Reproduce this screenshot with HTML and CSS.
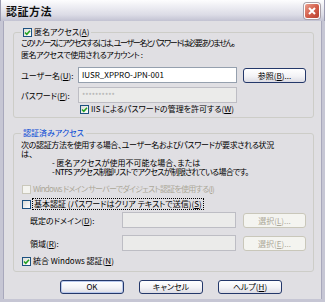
FILE: index.html
```html
<!DOCTYPE html>
<html lang="ja">
<head>
    <meta charset="UTF-8">
    <title>認証方法</title>
    <link rel="stylesheet" href="styles.css">
</head>
<body>
    <div class="window">
        <div class="titlebar">
            <span class="title">認証方法</span>
            <span class="close">
                <svg viewBox="0 0 14 14" width="14" height="14"><path d="M4 4l6 6M10 4l-6 6" /></svg>
            </span>
        </div>
        <div class="frame">
            <fieldset class="group">
                <legend>
                    <span class="legend-inner">
                        <span class="cb"><svg viewBox="0 0 7 7" width="7" height="7"><path d="M1 3.4l1.8 1.9L6 1.7" /></svg></span>
                        <span>匿名アクセス(<u>A</u>)</span>
                    </span>
                </legend>
                <p class="line tight">このリソースにアクセスするには、ユーザー名とパスワードは必要ありません。</p>
                <p class="line account">匿名アクセスで使用されるアカウント :</p>
                <div class="field-row first">
                    <span class="label">ユーザー名(<u>U</u>):</span>
                    <div class="input">IUSR_XPPRO-JPN-001</div>
                    <button class="btn">参照(<u>B</u>)...</button>
                </div>
                <div class="field-row">
                    <span class="label">パスワード(<u>P</u>):</span>
                    <div class="input disabled"><span class="stars">**********</span></div>
                </div>
                <div class="check-row iis">
                    <span class="cb"><svg viewBox="0 0 7 7" width="7" height="7"><path d="M1 3.4l1.8 1.9L6 1.7" /></svg></span>
                    <span>IIS によるパスワードの管理を許可する(<u>W</u>)</span>
                </div>
            </fieldset>

            <fieldset class="group second">
                <legend><span class="legend-inner blue">認証済みアクセス</span></legend>
                <div class="note">
                    <p class="slight">次の認証方法を使用する場合、ユーザー名およびパスワードが要求される状況</p>
                    <p>は、</p>
                    <p class="dash">- 匿名アクセスが使用不可能な場合、または</p>
                    <p class="dash narrow">- NTFS アクセス制御リストでアクセスが制限されている場合です。</p>
                </div>
                <div class="check-row digest off">
                    <span class="cb"></span>
                    <span class="narrow">Windows ドメイン サーバーでダイジェスト認証を使用する(<u>I</u>)</span>
                </div>
                <div class="check-row basic">
                    <span class="cb"></span>
                    <span class="focus">基本認証 (パスワードはクリア テキストで送信)(<u>S</u>)</span>
                </div>
                <div class="field-row domain">
                    <span class="label">既定のドメイン(<u>D</u>):</span>
                    <div class="input disabled"></div>
                    <button class="btn" disabled>選択(<u>L</u>)...</button>
                </div>
                <div class="field-row realm">
                    <span class="label">領域(<u>R</u>):</span>
                    <div class="input disabled"></div>
                    <button class="btn" disabled>選択(<u>E</u>)...</button>
                </div>
                <div class="check-row integrated">
                    <span class="cb"><svg viewBox="0 0 7 7" width="7" height="7"><path d="M1 3.4l1.8 1.9L6 1.7" /></svg></span>
                    <span>統合 Windows 認証(<u>N</u>)</span>
                </div>
            </fieldset>

            <div class="actions">
                <button class="btn default">OK</button>
                <button class="btn">キャンセル</button>
                <button class="btn">ヘルプ(<u>H</u>)</button>
            </div>
        </div>
    </div>
</body>
</html>
```

FILE: styles.css
```css
*{
    box-sizing : border-box;
}

body{
    margin : 0;
    background : #fff;
    font-family : "Noto Sans CJK JP", sans-serif;
    font-size : 8px;
    color : #000;
    font-feature-settings : "palt";
    white-space : nowrap;
}

p{
    margin : 0;
}

u{
    text-decoration-thickness : 1px;
    text-underline-offset : 1px;
}

/* kana in the original font run narrower than Noto's */
.tight{
    letter-spacing : -1.3px;
}

.narrow{
    letter-spacing : -0.75px;
}

.account{
    letter-spacing : -0.45px;
}

.slight{
    letter-spacing : -0.35px;
}

.window{
    width : 325px;
    height : 302px;
    display : flex;
    flex-direction : column;
    background : #e0dfe3;
    overflow : hidden;
}

.titlebar{
    height : 21px;
    flex : none;
    display : flex;
    align-items : center;
    justify-content : space-between;
    padding : 0 4px 0 5px;
    background : linear-gradient(#fdfdfe, #ececf2 35%, #dcdce6 70%, #c2c2d2);
    border-left : 1px solid #9c9cb2;
    border-right : 1px solid #9c9cb2;
}

.title{
    font-size : 11px;
    font-weight : bold;
    letter-spacing : 0.5px;
    color : #111;
}

.close{
    width : 16px;
    height : 16px;
    display : flex;
    align-items : center;
    justify-content : center;
    border : 1px solid #fff;
    border-radius : 3px;
    background : linear-gradient(135deg, #eaa08f, #d4604c 50%, #b8402e);
    box-shadow : 0 0 0 1px #a8a0a8;
}

.close path{
    stroke : #fff;
    stroke-width : 2;
    fill : none;
}

.frame{
    flex : 1;
    display : flex;
    flex-direction : column;
    border : 3px solid #c6c6d4;
    border-top : 0;
    box-shadow : inset 1px 0 0 #a8a8bc, inset -1px 0 0 #a8a8bc;
    padding : 6px 8px 0 10px;
}

.group{
    margin : 0;
    min-width : 0;
    padding : 0 6px 3px 7px;
    border : 1px solid #cdcdc8;
    border-radius : 3px;
}

.group legend{
    padding : 0 2px;
    height : 10px;
}

.legend-inner{
    display : flex;
    align-items : center;
    gap : 2px;
    height : 10px;
    line-height : 10px;
}

.blue{
    color : #0046d5;
}

.line{
    height : 12px;
    line-height : 12px;
}

.cb{
    width : 9px;
    height : 9px;
    flex : none;
    display : flex;
    align-items : center;
    justify-content : center;
    border : 1px solid #1c5180;
    background : linear-gradient(135deg, #dcdcd7, #fff);
}

.cb path{
    fill : none;
    stroke : #21a121;
    stroke-width : 1.5;
}

.check-row{
    display : flex;
    align-items : center;
    gap : 2px;
    height : 10px;
    line-height : 10px;
}

.check-row.off{
    color : #aca899;
}

.check-row.off .cb{
    border-color : #cac8bb;
    background : #f4f4f0;
}

.focus{
    outline : 1px dotted #000;
    outline-offset : 0;
    padding : 0 1px;
}

.field-row{
    display : flex;
    align-items : center;
    height : 16px;
    margin-top : 4px;
}

.field-row.first{
    margin-top : 6px;
}

.label{
    width : 57px;
    flex : none;
}

.input{
    width : 159px;
    height : 16px;
    flex : none;
    padding : 0 3px;
    line-height : 14px;
    border : 1px solid #95a0ae;
    background : #fff;
}

.input.disabled{
    background : #ebebea;
    border-color : #bdbdc4;
}

.stars{
    color : #a8a8a8;
    font-size : 7px;
}

.btn{
    width : 63px;
    height : 15px;
    flex : none;
    margin-left : 6px;
    padding : 0;
    font : inherit;
    font-feature-settings : "palt";
    color : #000;
    line-height : 13px;
    border : 1px solid #24386a;
    border-radius : 3px;
    background : linear-gradient(#ffffff, #f3f3f6 55%, #dcdce4);
}

.btn:disabled{
    color : #aca899;
    border-color : #c9c7ba;
    background : #f4f4f0;
}

.iis{
    margin-top : 1px;
    padding-left : 59px;
}

.second{
    margin-top : 10px;
    padding-bottom : 5px;
}

.second legend{
    height : 11px;
}

.note{
    margin-top : 1px;
    line-height : 9px;
}

.note p{
    height : 9px;
}

.dash{
    padding-left : 31px;
}

.digest{
    margin-top : 8px;
    padding-left : 1px;
}

.basic{
    margin-top : 5px;
    padding-left : 1px;
}

.domain{
    margin-top : 3px;
}

.realm{
    margin-top : 7px;
}

.domain .label, .realm .label{
    width : 101px;
    padding-left : 9px;
}

.domain .input, .realm .input{
    width : 114px;
}

.domain .btn, .realm .btn{
    margin-left : 7px;
}

.integrated{
    margin-top : 5px;
    padding-left : 1px;
}

.actions{
    display : flex;
    gap : 15px;
    margin-top : 8px;
    padding-left : 47px;
}

.actions .btn{
    width : 64px;
    height : 14px;
    line-height : 12px;
    margin-left : 0;
}

.btn.default{
    box-shadow : inset 0 0 0 1px #b8c8ec;
}
```
